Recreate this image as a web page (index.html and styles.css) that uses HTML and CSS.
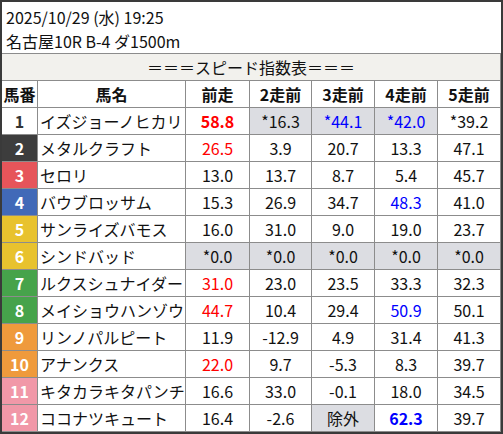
FILE: index.html
```html
<!DOCTYPE html>
<html lang="ja">
<head>
<meta charset="utf-8">
<title>スピード指数表</title>
<link rel="stylesheet" href="styles.css">
</head>
<body>
<div class="frame">
  <div class="info">
    <div class="line">2025/10/29 (水) 19:25</div>
    <div class="line">名古屋10R B-4 ダ1500m</div>
  </div>
  <div class="grid">
    <div class="title">＝＝＝スピード指数表＝＝＝</div>
    <div class="h">馬番</div><div class="h">馬名</div><div class="h">前走</div><div class="h">2走前</div><div class="h">3走前</div><div class="h">4走前</div><div class="h">5走前</div>

    <div class="no w1">1</div><div class="nm">イズジョーノヒカリ</div><div class="v red b">58.8</div><div class="v g">*16.3</div><div class="v g blue">*44.1</div><div class="v g blue">*42.0</div><div class="v">*39.2</div>

    <div class="no w2">2</div><div class="nm">メタルクラフト</div><div class="v red">26.5</div><div class="v">3.9</div><div class="v">20.7</div><div class="v">13.3</div><div class="v">47.1</div>

    <div class="no w3">3</div><div class="nm">セロリ</div><div class="v">13.0</div><div class="v">13.7</div><div class="v">8.7</div><div class="v">5.4</div><div class="v">45.7</div>

    <div class="no w4">4</div><div class="nm">バウブロッサム</div><div class="v">15.3</div><div class="v">26.9</div><div class="v">34.7</div><div class="v blue">48.3</div><div class="v">41.0</div>

    <div class="no w5">5</div><div class="nm">サンライズバモス</div><div class="v">16.0</div><div class="v">31.0</div><div class="v">9.0</div><div class="v">19.0</div><div class="v">23.7</div>

    <div class="no w5">6</div><div class="nm">シンドバッド</div><div class="v g">*0.0</div><div class="v g">*0.0</div><div class="v g">*0.0</div><div class="v g">*0.0</div><div class="v g">*0.0</div>

    <div class="no w7">7</div><div class="nm">ルクスシュナイダー</div><div class="v red">31.0</div><div class="v">23.0</div><div class="v">23.5</div><div class="v">33.3</div><div class="v">32.3</div>

    <div class="no w7">8</div><div class="nm">メイショウハンゾウ</div><div class="v red">44.7</div><div class="v">10.4</div><div class="v">29.4</div><div class="v blue">50.9</div><div class="v">50.1</div>

    <div class="no w9">9</div><div class="nm">リンノパルピート</div><div class="v">11.9</div><div class="v">-12.9</div><div class="v">4.9</div><div class="v">31.4</div><div class="v">41.3</div>

    <div class="no w9">10</div><div class="nm">アナンクス</div><div class="v red">22.0</div><div class="v">9.7</div><div class="v">-5.3</div><div class="v">8.3</div><div class="v">39.7</div>

    <div class="no w11">11</div><div class="nm">キタカラキタパンチ</div><div class="v">16.6</div><div class="v">33.0</div><div class="v">-0.1</div><div class="v">18.0</div><div class="v">34.5</div>

    <div class="no w11">12</div><div class="nm">ココナツキュート</div><div class="v">16.4</div><div class="v">-2.6</div><div class="v g">除外</div><div class="v blue b">62.3</div><div class="v">39.7</div>
  </div>
</div>
</body>
</html>
```

FILE: styles.css
```css
html, body {
  margin: 0;
  padding: 0;
  background: #ffffff;
}

body {
  font-family: "Noto Sans CJK JP", "Noto Sans", sans-serif;
  font-size: 16px;
  color: #111111;
}

.frame {
  width: 503px;
  height: 434px;
  box-sizing: border-box;
  border: 2px solid #3a3a3a;
  background: #ffffff;
  overflow: hidden;
}

.info {
  height: 51px;
  box-sizing: border-box;
  padding: 3px 0 0 4px;
}

.line {
  line-height: 24px;
  white-space: nowrap;
}

.grid {
  display: grid;
  grid-template-columns: 35px 147px 63px 61px 62px 62px 62px;
  grid-auto-rows: 26px;
  gap: 1px;
  padding: 1px 1px 1px 0;
  background: #8c8c8c;
}

.grid > div {
  background: #ffffff;
  display: flex;
  align-items: center;
  white-space: nowrap;
  overflow: hidden;
}

.grid > .title {
  grid-column: 1 / -1;
  justify-content: center;
  background: #f2f1ed;
}

.h {
  justify-content: center;
  font-weight: bold;
}

.no {
  justify-content: center;
  font-weight: bold;
  color: #ffffff;
}

.nm {
  padding-left: 2px;
}

.v {
  justify-content: center;
}

.grid > .g {
  background: #dcdde2;
}

.red {
  color: #ff0000;
}

.blue {
  color: #0000ff;
}

.b {
  font-weight: bold;
}

.grid > .w1 {
  background: #ffffff;
  color: #333333;
}

.grid > .w2 {
  background: #3d3d3d;
}

.grid > .w3 {
  background: #e6555a;
}

.grid > .w4 {
  background: #4169b8;
}

.grid > .w5 {
  background: #e8c22e;
}

.grid > .w7 {
  background: #46a34b;
}

.grid > .w9 {
  background: #ef9a3c;
}

.grid > .w11 {
  background: #f198a8;
}
```
